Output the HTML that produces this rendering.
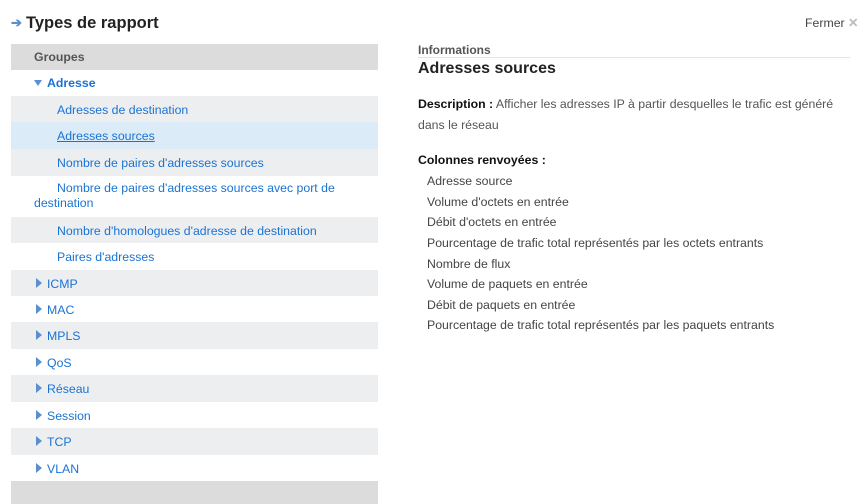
<!DOCTYPE html>
<html><head><meta charset="utf-8"><style>
body{margin:0;width:866px;height:504px;background:#fff;font-family:"Liberation Sans",Arial,sans-serif;position:relative;overflow:hidden}
.a{position:absolute}
.row{position:absolute;left:11px;width:367px;font-size:12.3px;color:#1a73d4}
.g{background:#edeef0}
.t{position:absolute;left:35px;border-left:6px solid #5a8fd0;border-top:5px solid transparent;border-bottom:5px solid transparent;width:0;height:0}
.lbl{position:absolute;left:36px}
.sub{position:absolute;left:46px}
.r{font-size:12.3px;color:#444;left:427px;position:absolute}
</style></head><body>
<div class="a" style="left:11px;top:15px;font-size:13px;color:#5a8fd0;font-weight:bold">➔</div>
<div class="a" style="left:26px;top:14px;font-size:16.5px;font-weight:bold;color:#222">Types de rapport</div>
<div class="a" style="left:11px;top:44px;width:367px;height:26px;background:#dcdcdc"></div>
<div class="a" style="left:34px;top:50px;font-size:12.3px;font-weight:bold;color:#555">Groupes</div>

<div class="row" style="top:70px;height:26px"><div class="a" style="left:23px;top:10px;border-top:6px solid #5a8fd0;border-left:4.5px solid transparent;border-right:4.5px solid transparent"></div><span class="lbl" style="top:6px;font-weight:bold">Adresse</span></div>
<div class="row g" style="top:96px;height:26px"><span class="sub" style="top:7px">Adresses de destination</span></div>
<div class="row" style="top:122px;height:27px;background:#dcebf8"><span class="sub" style="top:7px;text-decoration:underline">Adresses sources</span></div>
<div class="row g" style="top:149px;height:27px"><span class="sub" style="top:7px">Nombre de paires d'adresses sources</span></div>
<div class="row" style="top:176px;height:41px"><span class="a" style="left:23px;top:5px;line-height:15px;width:320px;text-indent:23px">Nombre de paires d'adresses sources avec port de destination</span></div>
<div class="row g" style="top:217px;height:26px"><span class="sub" style="top:7px">Nombre d'homologues d'adresse de destination</span></div>
<div class="row" style="top:243px;height:27px"><span class="sub" style="top:7px">Paires d'adresses</span></div>

<div class="row g" style="top:270px;height:26px"><div class="t" style="left:25px;top:8px"></div><span class="lbl" style="top:7px">ICMP</span></div>
<div class="row" style="top:296px;height:26px"><div class="t" style="left:25px;top:8px"></div><span class="lbl" style="top:7px">MAC</span></div>
<div class="row g" style="top:322px;height:27px"><div class="t" style="left:25px;top:8px"></div><span class="lbl" style="top:7px">MPLS</span></div>
<div class="row" style="top:349px;height:26px"><div class="t" style="left:25px;top:8px"></div><span class="lbl" style="top:7px">QoS</span></div>
<div class="row g" style="top:375px;height:27px"><div class="t" style="left:25px;top:8px"></div><span class="lbl" style="top:7px">Réseau</span></div>
<div class="row" style="top:402px;height:26px"><div class="t" style="left:25px;top:8px"></div><span class="lbl" style="top:7px">Session</span></div>
<div class="row g" style="top:428px;height:27px"><div class="t" style="left:25px;top:8px"></div><span class="lbl" style="top:7px">TCP</span></div>
<div class="row" style="top:455px;height:26px"><div class="t" style="left:25px;top:8px"></div><span class="lbl" style="top:7px">VLAN</span></div>
<div class="a" style="left:11px;top:481px;width:367px;height:23px;background:#dcdcdc"></div>

<div class="a" style="left:805px;top:16px;font-size:12.3px;color:#444">Fermer <span style="color:#bbb;font-weight:bold">✕</span></div>
<div class="a" style="left:418px;top:43px;font-size:12px;font-weight:bold;color:#555">Informations</div>
<div class="a" style="left:418px;top:57px;width:432px;height:1px;background:#e4e4e4"></div>
<div class="a" style="left:418px;top:60px;font-size:16px;font-weight:bold;color:#222">Adresses sources</div>
<div class="a" style="left:418px;top:94px;width:430px;font-size:12.3px;color:#555;line-height:21px"><b style="color:#111">Description :</b> Afficher les adresses IP à partir desquelles le trafic est généré dans le réseau</div>
<div class="a" style="left:418px;top:153px;font-size:12.3px;font-weight:bold;color:#111">Colonnes renvoyées :</div>
<div class="r" style="top:174px">Adresse source</div>
<div class="r" style="top:195px">Volume d'octets en entrée</div>
<div class="r" style="top:215px">Débit d'octets en entrée</div>
<div class="r" style="top:236px">Pourcentage de trafic total représentés par les octets entrants</div>
<div class="r" style="top:257px">Nombre de flux</div>
<div class="r" style="top:277px">Volume de paquets en entrée</div>
<div class="r" style="top:298px">Débit de paquets en entrée</div>
<div class="r" style="top:318px">Pourcentage de trafic total représentés par les paquets entrants</div>
</body></html>
